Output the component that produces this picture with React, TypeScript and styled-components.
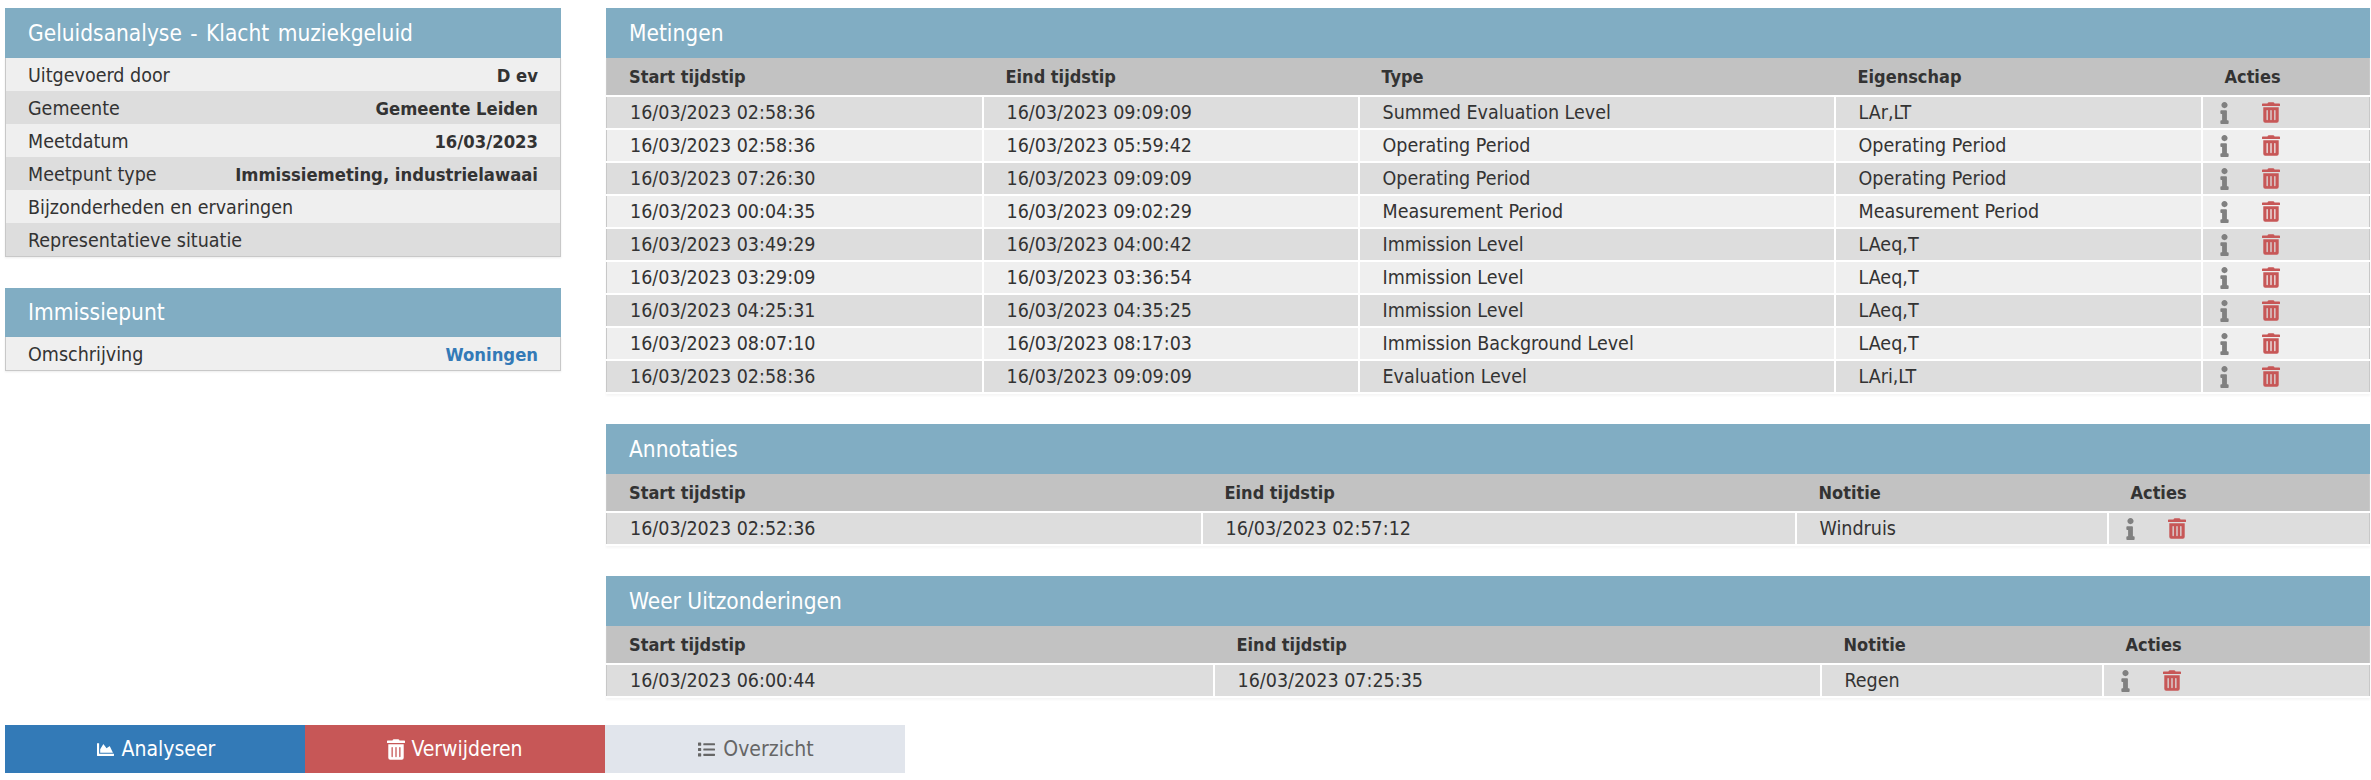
import { createGlobalStyle } from 'styled-components';
import styled from 'styled-components';
import { FaChartArea, FaInfo, FaList, FaTrashAlt } from 'react-icons/fa';

const metingen = [
  ['16/03/2023 02:58:36', '16/03/2023 09:09:09', 'Summed Evaluation Level', 'LAr,LT'],
  ['16/03/2023 02:58:36', '16/03/2023 05:59:42', 'Operating Period', 'Operating Period'],
  ['16/03/2023 07:26:30', '16/03/2023 09:09:09', 'Operating Period', 'Operating Period'],
  ['16/03/2023 00:04:35', '16/03/2023 09:02:29', 'Measurement Period', 'Measurement Period'],
  ['16/03/2023 03:49:29', '16/03/2023 04:00:42', 'Immission Level', 'LAeq,T'],
  ['16/03/2023 03:29:09', '16/03/2023 03:36:54', 'Immission Level', 'LAeq,T'],
  ['16/03/2023 04:25:31', '16/03/2023 04:35:25', 'Immission Level', 'LAeq,T'],
  ['16/03/2023 08:07:10', '16/03/2023 08:17:03', 'Immission Background Level', 'LAeq,T'],
  ['16/03/2023 02:58:36', '16/03/2023 09:09:09', 'Evaluation Level', 'LAri,LT'],
];

const details = [
  ['Uitgevoerd door', 'D ev'],
  ['Gemeente', 'Gemeente Leiden'],
  ['Meetdatum', '16/03/2023'],
  ['Meetpunt type', 'Immissiemeting, industrielawaai'],
  ['Bijzonderheden en ervaringen', ''],
  ['Representatieve situatie', ''],
];

interface ITableProps {
  title: string;
  head: string[];
  rows: string[][];
  widths: number[];
}

function DataPanel({ title, head, rows, widths }: ITableProps) {
  return (
    <section>
      <S.PanelTitle>{title}</S.PanelTitle>
      <S.Table>
        <colgroup>
          {widths.map((w, i) => (
            <col key={i} style={{ width: w }} />
          ))}
        </colgroup>
        <thead>
          <tr>
            {head.map((h) => (
              <S.Th key={h}>{h}</S.Th>
            ))}
            <S.Th>Acties</S.Th>
          </tr>
        </thead>
        <tbody>
          {rows.map((row, i) => (
            <S.Tr key={i}>
              {row.map((cell, j) => (
                <S.Td key={j}>{cell}</S.Td>
              ))}
              <S.Td>
                <S.Actions>
                  <S.InfoIcon />
                  <S.TrashIcon />
                </S.Actions>
              </S.Td>
            </S.Tr>
          ))}
        </tbody>
      </S.Table>
    </section>
  );
}

export default function App() {
  return (
    <>
      <GlobalStyle />
      <S.Page>
        <S.Columns>
          <S.Left>
            <section>
              <S.PanelTitle $spaced>Geluidsanalyse - Klacht muziekgeluid</S.PanelTitle>
              <S.InfoList>
                {details.map(([label, value]) => (
                  <S.InfoRow key={label}>
                    <span>{label}</span>
                    <S.InfoValue>{value}</S.InfoValue>
                  </S.InfoRow>
                ))}
              </S.InfoList>
            </section>
            <section>
              <S.PanelTitle $short>Immissiepunt</S.PanelTitle>
              <S.InfoList>
                <S.InfoRow>
                  <span>Omschrijving</span>
                  <S.InfoLink href="#">Woningen</S.InfoLink>
                </S.InfoRow>
              </S.InfoList>
            </section>
          </S.Left>
          <S.Right>
            <DataPanel
              title="Metingen"
              head={['Start tijdstip', 'Eind tijdstip', 'Type', 'Eigenschap']}
              rows={metingen}
              widths={[376, 376, 476, 367, 168]}
            />
            <DataPanel
              title="Annotaties"
              head={['Start tijdstip', 'Eind tijdstip', 'Notitie']}
              rows={[['16/03/2023 02:52:36', '16/03/2023 02:57:12', 'Windruis']]}
              widths={[595, 594, 312, 262]}
            />
            <DataPanel
              title="Weer Uitzonderingen"
              head={['Start tijdstip', 'Eind tijdstip', 'Notitie']}
              rows={[['16/03/2023 06:00:44', '16/03/2023 07:25:35', 'Regen']]}
              widths={[607, 607, 282, 267]}
            />
          </S.Right>
        </S.Columns>
        <S.Buttons>
          <S.Button $bg="#337ab7" $fg="#fff">
            <S.ChartIcon />
            Analyseer
          </S.Button>
          <S.Button $bg="#c75757" $fg="#fff">
            <S.ButtonTrash />
            Verwijderen
          </S.Button>
          <S.Button $bg="#e1e5ec" $fg="#666">
            <S.ListIcon />
            Overzicht
          </S.Button>
        </S.Buttons>
      </S.Page>
    </>
  );
}

const GlobalStyle = createGlobalStyle`
  html, body {
    margin: 0;
    background: #fff;
  }
  body {
    font-family: "DejaVu Sans Condensed", "DejaVu Sans", sans-serif;
    font-size: 19.5px;
    color: #333;
  }
`;

const S = {
  Page: styled.div`
    width: 2371px;
    height: 780px;
    padding: 8px 2px 0 5px;
    box-sizing: border-box;
    overflow: hidden;
  `,
  Columns: styled.div`
    display: flex;
    gap: 45px;
    height: 717px;
  `,
  Left: styled.div`
    width: 556px;
    flex: none;
    display: flex;
    flex-direction: column;
    gap: 31px;
  `,
  Right: styled.div`
    flex: 1;
    display: flex;
    flex-direction: column;
    gap: 30px;
  `,
  PanelTitle: styled.h2<{ $short?: boolean; $spaced?: boolean }>`
    margin: 0;
    height: ${(p) => (p.$short ? 49 : 50)}px;
    padding-left: 23px;
    background: #81adc3;
    color: #fff;
    font-size: 22.5px;
    font-weight: 400;
    word-spacing: ${(p) => (p.$spaced ? 2 : 0)}px;
    line-height: ${(p) => (p.$short ? 49 : 50)}px;
  `,
  InfoList: styled.div`
    border: solid #c8c8c8;
    border-width: 0 1px 1px;
    box-shadow: 0 1px 2px rgb(0 0 0 / 8%);
  `,
  InfoRow: styled.div`
    display: flex;
    justify-content: space-between;
    height: 33px;
    padding: 0 22px;
    line-height: 35px;
    background: #efefef;
    &:nth-child(even) {
      background: #dddddd;
    }
  `,
  InfoValue: styled.span`
    font-size: 18.3px;
    font-weight: 700;
  `,
  InfoLink: styled.a`
    font-size: 18.3px;
    font-weight: 700;
    color: #337ab7;
    text-decoration: none;
  `,
  Table: styled.table`
    width: 100%;
    table-layout: fixed;
    border-collapse: collapse;
    border-left: 1px solid #c8c8c8;
    border-right: 1px solid #c8c8c8;
    box-shadow: 0 2px 2px rgb(0 0 0 / 4%);
  `,
  Th: styled.th`
    height: 38px;
    padding: 0 0 0 23px;
    background: #c2c2c2;
    text-align: left;
    font-size: 18px;
    font-weight: 700;
    color: #333;
    border-bottom: 2px solid #fff;
    box-sizing: border-box;
    &:first-child {
      padding-left: 22px;
    }
  `,
  Tr: styled.tr`
    background: #dddddd;
    &:nth-child(even) {
      background: #efefef;
    }
  `,
  Td: styled.td`
    height: 33px;
    padding: 0 0 0 23px;
    box-sizing: border-box;
    font-size: 19.5px;
    color: #333;
    border-bottom: 2px solid #fff;
    border-right: 2px solid #fff;
    &:last-child {
      border-right: 0;
    }
  `,
  Actions: styled.div`
    display: flex;
    align-items: center;
    gap: 33px;
    margin-left: -6px;
  `,
  InfoIcon: styled(FaInfo)`
    width: 9px;
    height: 22px;
    color: #808080;
  `,
  TrashIcon: styled(FaTrashAlt)`
    width: 18px;
    height: 21px;
    color: #c75757;
  `,
  Buttons: styled.div`
    display: flex;
  `,
  Button: styled.button<{ $bg: string; $fg: string }>`
    width: 300px;
    height: 48px;
    display: flex;
    align-items: center;
    justify-content: center;
    gap: 6px;
    border: 0;
    padding: 0;
    background: ${(p) => p.$bg};
    color: ${(p) => p.$fg};
    font: inherit;
    font-size: 21px;
  `,
  ChartIcon: styled(FaChartArea)`
    width: 21px;
    height: 17px;
  `,
  ButtonTrash: styled(FaTrashAlt)`
    width: 18px;
    height: 21px;
  `,
  ListIcon: styled(FaList)`
    width: 21px;
    height: 17px;
  `,
};
